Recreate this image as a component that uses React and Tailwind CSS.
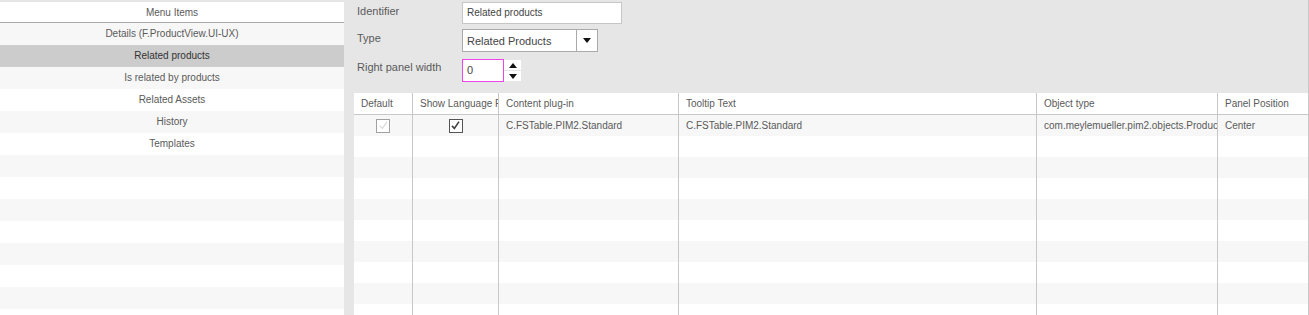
import React from 'react';

const menu = [
  'Details (F.ProductView.UI-UX)',
  'Related products',
  'Is related by products',
  'Related Assets',
  'History',
  'Templates',
];

const cols = [
  { title: 'Default', w: 'w-[58px]' },
  { title: 'Show Language Fallback', w: 'w-[86px]' },
  { title: 'Content plug-in', w: 'w-[180px]' },
  { title: 'Tooltip Text', w: 'w-[358px]' },
  { title: 'Object type', w: 'w-[181px]' },
  { title: 'Panel Position', w: 'flex-1' },
];

function Check({ disabled }) {
  return (
    <span
      className={
        'flex h-[14px] w-[14px] items-center justify-center border bg-white ' +
        (disabled ? 'border-[#a0a0a0]' : 'border-[#555]')
      }
    >
      <svg viewBox="0 0 12 12" className="h-[11px] w-[11px]">
        <path
          d="M2.2 6.4 L4.8 9.2 L9.8 1.8"
          fill="none"
          stroke={disabled ? '#d4d4d4' : '#444'}
          strokeWidth={disabled ? 1.1 : 1.8}
        />
      </svg>
    </span>
  );
}

function Triangle({ up }) {
  return (
    <svg viewBox="0 0 8 5" className="h-[5px] w-[8px]">
      <path d={up ? 'M0 5 L4 0 L8 5 Z' : 'M0 0 L8 0 L4 5 Z'} fill="#111" />
    </svg>
  );
}

export default function App() {
  const rows = Array.from({ length: 9 });
  return (
    <div className="flex h-[315px] w-[1309px] overflow-hidden bg-[#e6e6e6] font-['Liberation_Sans',Arial,sans-serif] text-[10px] text-[#5a5a5a]">
      {/* left menu */}
      <div className="mt-[2px] flex w-[344px] flex-col overflow-hidden bg-white">
        <div className="flex h-[21px] shrink-0 items-center justify-center border-b border-[#a8a8a8]">Menu Items</div>
        {menu.map((m, i) => (
          <div
            key={m}
            className={
              'flex h-[22px] shrink-0 items-center justify-center pb-[1px] ' +
              (i === 1 ? 'bg-[#cccccc] text-[#333]' : i % 2 === 0 ? 'bg-[#f7f7f7]' : 'bg-white')
            }
          >
            {m}
          </div>
        ))}
        {rows.map((_, i) => (
          <div key={i} className={'h-[22px] shrink-0 ' + (i % 2 === 0 ? 'bg-[#f7f7f7]' : 'bg-white')} />
        ))}
      </div>

      {/* right panel */}
      <div className="flex flex-1 flex-col border-r border-[#c8c8c8] pl-[10px]">
        <div className="flex flex-col pl-[3px] pt-[2px] text-[11px]">
          <div className="flex h-[22px] items-center">
            <span className="mt-[-4px] w-[105px]">Identifier</span>
            <div className="flex h-[22px] w-[160px] items-center border border-[#c6c6c6] bg-white pb-[2px] pl-[4px] text-[10px] text-[#444]">
              Related products
            </div>
          </div>
          <div className="mt-[5px] flex h-[23px] items-center">
            <span className="mt-[-5px] w-[105px]">Type</span>
            <div className="flex h-[23px] w-[136px] items-center border border-[#aaa] bg-white text-[11px] text-[#444]">
              <span className="flex-1 pl-[4px] pt-[1px]">Related Products</span>
              <span className="flex h-full w-[21px] items-center justify-center border-l border-[#aaa]">
                <Triangle />
              </span>
            </div>
          </div>
          <div className="mt-[7px] flex h-[23px] items-center">
            <span className="mt-[-6px] w-[105px]">Right panel width</span>
            <div className="flex h-[23px] w-[42px] items-center border border-[#ee44ee] bg-white pl-[4px] text-[11px] text-[#444]">
              0
            </div>
            <div className="flex h-[21px] w-[17px] flex-col gap-[1px]">
              <span className="flex flex-1 items-center justify-center bg-white">
                <Triangle up />
              </span>
              <span className="flex flex-1 items-center justify-center bg-white">
                <Triangle />
              </span>
            </div>
          </div>
        </div>

        {/* table */}
        <div className="mt-[11px] flex flex-1 flex-col overflow-hidden bg-white">
          <div className="flex h-[22px] shrink-0 border-b border-[#c8c8c8]">
            {cols.map((c, i) => (
              <div
                key={c.title}
                className={
                  c.w +
                  ' flex items-center overflow-hidden whitespace-nowrap ' +
                  (i > 0 ? 'border-l border-[#c8c8c8] pl-[7px]' : 'pl-[7px]')
                }
              >
                {c.title}
              </div>
            ))}
          </div>
          <div className="flex h-[21px] shrink-0 bg-[#f7f7f7]">
            <div className="flex w-[58px] items-center justify-center">
              <Check disabled />
            </div>
            <div className="flex w-[86px] items-center justify-center border-l border-[#c8c8c8]">
              <Check />
            </div>
            <div className="flex w-[180px] items-center overflow-hidden whitespace-nowrap border-l border-[#c8c8c8] pl-[7px]">
              C.FSTable.PIM2.Standard
            </div>
            <div className="flex w-[358px] items-center overflow-hidden whitespace-nowrap border-l border-[#c8c8c8] pl-[7px]">
              C.FSTable.PIM2.Standard
            </div>
            <div className="flex w-[181px] items-center overflow-hidden whitespace-nowrap border-l border-[#c8c8c8] pl-[7px]">
              com.meylemueller.pim2.objects.Product
            </div>
            <div className="flex flex-1 items-center border-l border-[#c8c8c8] pl-[7px]">Center</div>
          </div>
          {rows.map((_, r) => (
            <div key={r} className={'flex h-[21px] shrink-0 ' + (r % 2 === 1 ? 'bg-[#f7f7f7]' : 'bg-white')}>
              {cols.map((c, i) => (
                <div key={c.title} className={c.w + (i > 0 ? ' border-l border-[#c8c8c8]' : '')} />
              ))}
            </div>
          ))}
        </div>
      </div>
    </div>
  );
}
